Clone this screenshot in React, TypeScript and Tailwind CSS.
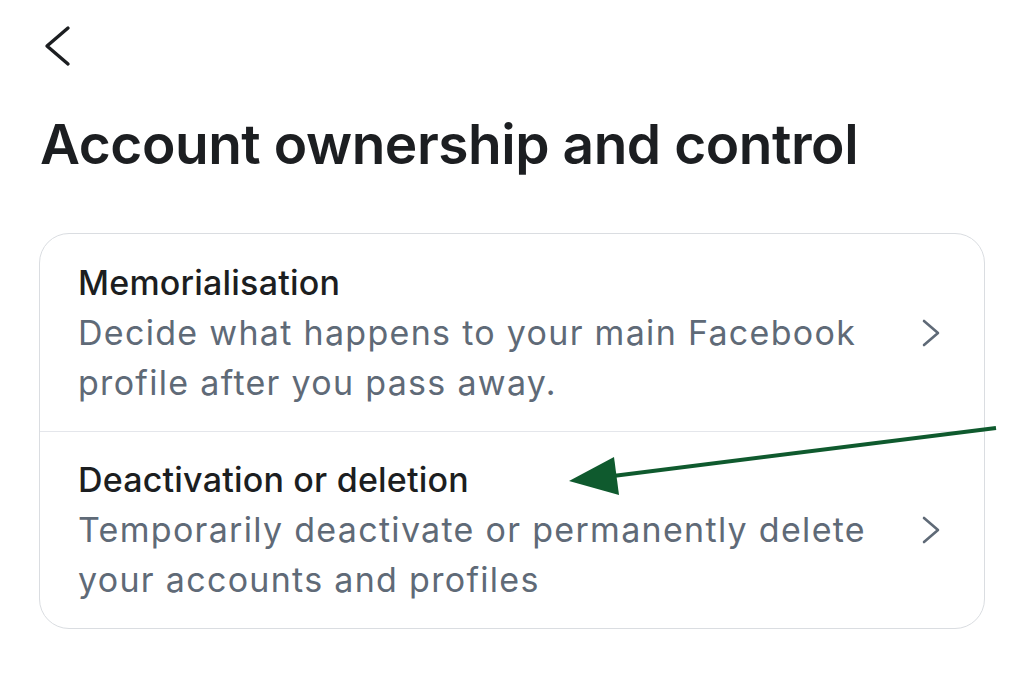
const rows = [
  {
    title: "Memorialisation",
    lines: ["Decide what happens to your main Facebook", "profile after you pass away."],
  },
  {
    title: "Deactivation or deletion",
    lines: ["Temporarily deactivate or permanently delete", "your accounts and profiles"],
  },
];

function Back() {
  return (
    <svg width="30" height="42" viewBox="0 0 30 42" fill="none">
      <path d="M26 3 L5 21 L26 39" stroke="#1c1e21" strokeWidth="3.4" strokeLinecap="round" strokeLinejoin="round" />
    </svg>
  );
}

function Chevron() {
  return (
    <svg width="22" height="30" viewBox="0 0 22 30" fill="none">
      <path d="M4 3 L18 15 L4 27" stroke="#5f6a77" strokeWidth="2.6" strokeLinecap="round" strokeLinejoin="round" />
    </svg>
  );
}

export default function App() {
  return (
    <div
      className="relative w-[1024px] h-[673px] bg-white overflow-hidden"
      style={{ fontFamily: "Inter, 'Noto Sans', sans-serif" }}
    >
      <div className="pl-[42px] pt-[25px]">
        <Back />
      </div>

      <h1 className="pl-[40px] mt-[45px] text-[55px] leading-[64px] font-semibold tracking-[-0.45px] text-[#1c1e21]">
        Account ownership and control
      </h1>

      <div className="mx-[39px] mt-[57px] rounded-[30px] border-[1.5px] border-[#dadde1] overflow-hidden">
        {rows.map((r, i) => (
          <div
            key={r.title}
            className={
              "flex items-center pl-[38px] pr-[42px] h-[197px] " +
              (i > 0 ? "border-t border-[#e4e6eb]" : "")
            }
          >
            <div className="flex-1">
              <div className="text-[34px] leading-[50px] font-medium tracking-[0.2px] text-[#1c1e21]">{r.title}</div>
              {r.lines.map((l) => (
                <div key={l} className="text-[34px] leading-[50px] tracking-[1.3px] text-[#5f6a77]">
                  {l}
                </div>
              ))}
            </div>
            <Chevron />
          </div>
        ))}
      </div>

      <svg className="absolute left-0 top-0" width="1024" height="673" viewBox="0 0 1024 673">
        <line x1="996" y1="428" x2="605" y2="477" stroke="#0f5a2e" strokeWidth="4" />
        <polygon points="569,481 614,457 619,495" fill="#0f5a2e" />
      </svg>
    </div>
  );
}
